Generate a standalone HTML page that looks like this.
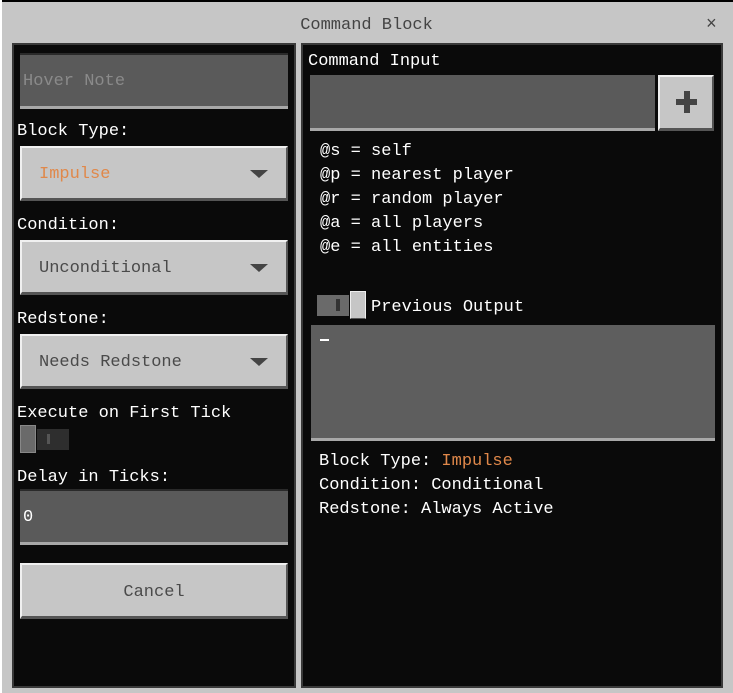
<!DOCTYPE html>
<html><head><style>
*{margin:0;padding:0;box-sizing:border-box}
body{width:733px;height:693px;background:#c6c6c6;position:relative;overflow:hidden;font-family:"Liberation Mono",monospace;font-size:17px;color:#fff}
.a{position:absolute}
.t{position:absolute;white-space:nowrap;line-height:20px;transform:translateY(2px)}
.panel{position:absolute;background:#0a0a0a;border:2px solid #3a3a3a}
.field{position:absolute;background:#5a5a5a;border-bottom:3px solid #a8a8a8;border-top:2px solid #2a2a2a}
.btn{position:absolute;background:#c6c6c6;border:2px solid #f0f0f0;border-right-color:#555;border-bottom:3px solid #555;color:#4a4a4a}
.arr{position:absolute;right:18px;top:22px;width:0;height:0;border-left:9px solid transparent;border-right:9px solid transparent;border-top:8px solid #444}
</style></head><body>
<div class="a" style="left:0;top:0;width:733px;height:2px;background:#000"></div>
<div class="a" style="left:0;top:0;width:2px;height:693px;background:#fff"></div>
<div class="t" style="left:0;width:733px;text-align:center;top:14px;color:#444">Command Block</div>
<div class="t" style="left:706px;top:13px;color:#444;font-size:18px">×</div>

<div class="panel" style="left:12px;top:43px;width:284px;height:645px"></div>
<div class="panel" style="left:301px;top:43px;width:422px;height:645px"></div>

<div class="field" style="left:20px;top:53px;width:268px;height:56px"></div>
<div class="t" style="left:23px;top:70px;color:#8a8a8a">Hover Note</div>

<div class="t" style="left:17px;top:120px">Block Type:</div>
<div class="btn" style="left:20px;top:146px;width:268px;height:55px"><div class="t" style="left:17px;top:15px;color:#e0884a">Impulse</div><div class="arr"></div></div>
<div class="t" style="left:17px;top:214px">Condition:</div>
<div class="btn" style="left:20px;top:240px;width:268px;height:55px"><div class="t" style="left:17px;top:15px">Unconditional</div><div class="arr"></div></div>
<div class="t" style="left:17px;top:308px">Redstone:</div>
<div class="btn" style="left:20px;top:334px;width:268px;height:55px"><div class="t" style="left:17px;top:15px">Needs Redstone</div><div class="arr"></div></div>

<div class="t" style="left:17px;top:402px">Execute on First Tick</div>
<div class="a" style="left:37px;top:429px;width:32px;height:21px;background:#2e2e2e"></div>
<div class="a" style="left:47px;top:434px;width:3px;height:10px;background:#555"></div>
<div class="a" style="left:20px;top:425px;width:16px;height:28px;background:#6a6a6a;border:1px solid #888"></div>

<div class="t" style="left:17px;top:466px">Delay in Ticks:</div>
<div class="field" style="left:20px;top:489px;width:268px;height:56px"></div>
<div class="t" style="left:23px;top:506px">0</div>

<div class="btn" style="left:20px;top:563px;width:268px;height:56px"><div class="t" style="left:0;width:264px;text-align:center;top:16px">Cancel</div></div>

<div class="t" style="left:308px;top:50px">Command Input</div>
<div class="field" style="left:310px;top:75px;width:345px;height:56px;border-top:0"></div>
<div class="btn" style="left:658px;top:75px;width:56px;height:56px"></div>
<div class="a" style="left:676px;top:99px;width:21px;height:6px;background:#444"></div>
<div class="a" style="left:684px;top:91px;width:6px;height:22px;background:#444"></div>

<div class="t" style="left:320px;top:140px">@s = self</div>
<div class="t" style="left:320px;top:164px">@p = nearest player</div>
<div class="t" style="left:320px;top:188px">@r = random player</div>
<div class="t" style="left:320px;top:212px">@a = all players</div>
<div class="t" style="left:320px;top:236px">@e = all entities</div>

<div class="a" style="left:317px;top:295px;width:32px;height:21px;background:#6a6a6a"></div>
<div class="a" style="left:336px;top:299px;width:4px;height:12px;background:#333"></div>
<div class="a" style="left:350px;top:291px;width:16px;height:28px;background:#c6c6c6;border:1px solid #eee;border-bottom-color:#555"></div>
<div class="t" style="left:371px;top:296px">Previous Output</div>

<div class="field" style="left:311px;top:325px;width:404px;height:116px;background:#5e5e5e;border-top:0"></div>
<div class="a" style="left:320px;top:339px;width:9px;height:2px;background:#fff"></div>

<div class="t" style="left:319px;top:450px">Block Type: <span style="color:#e0884a">Impulse</span></div>
<div class="t" style="left:319px;top:474px">Condition: Conditional</div>
<div class="t" style="left:319px;top:498px">Redstone: Always Active</div>
</body></html>
